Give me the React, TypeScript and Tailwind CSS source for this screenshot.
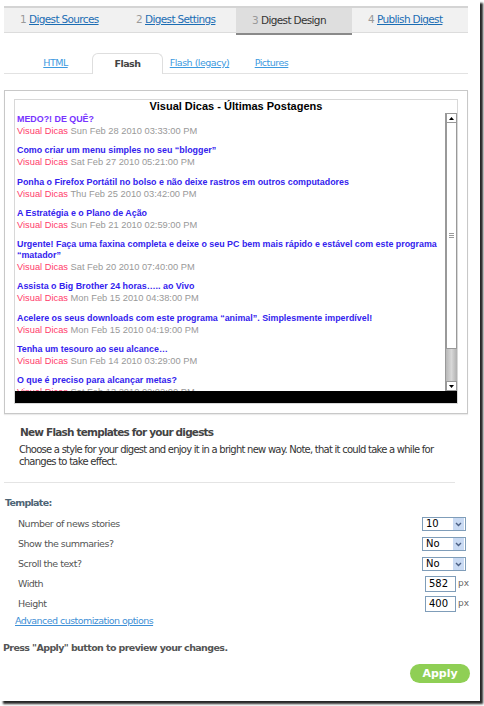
import React from "react";

type Post = { title: string; date: string; visited?: boolean };

const posts: Post[] = [
  { title: "MEDO?! DE QUÊ?", date: "Sun Feb 28 2010 03:33:00 PM", visited: true },
  { title: "Como criar um menu simples no seu “blogger”", date: "Sat Feb 27 2010 05:21:00 PM" },
  { title: "Ponha o Firefox Portátil no bolso e não deixe rastros em outros computadores", date: "Thu Feb 25 2010 03:42:00 PM" },
  { title: "A Estratégia e o Plano de Ação", date: "Sun Feb 21 2010 02:59:00 PM" },
  { title: "Urgente! Faça uma faxina completa e deixe o seu PC bem mais rápido e estável com este programa “matador”", date: "Sat Feb 20 2010 07:40:00 PM" },
  { title: "Assista o Big Brother 24 horas….. ao Vivo", date: "Mon Feb 15 2010 04:38:00 PM" },
  { title: "Acelere os seus downloads com este programa “animal”. Simplesmente imperdível!", date: "Mon Feb 15 2010 04:19:00 PM" },
  { title: "Tenha um tesouro ao seu alcance…", date: "Sun Feb 14 2010 03:29:00 PM" },
  { title: "O que é preciso para alcançar metas?", date: "Sat Feb 13 2010 02:02:00 PM" },
];

const steps = [
  { n: 1, label: "Digest Sources" },
  { n: 2, label: "Digest Settings" },
  { n: 3, label: "Digest Design", active: true },
  { n: 4, label: "Publish Digest" },
];

const tabs = [
  { label: "HTML" },
  { label: "Flash", active: true },
  { label: "Flash (legacy)" },
  { label: "Pictures" },
];

const ui = "font-['DejaVu_Sans',Tahoma,sans-serif]";
const flash = "font-['Liberation_Sans',Arial,sans-serif]";

const Select = ({ value }: { value: string }) => (
  <div className="flex items-center w-[44px] h-[14px] border border-[#7f9db9] bg-white">
    <span className="flex-1 pl-[3px] text-[10px] leading-[12px] text-black">{value}</span>
    <span className="flex items-center justify-center w-[11px] h-[12px] bg-[#c9daf3] mr-px">
      <svg width="7" height="5" viewBox="0 0 7 5">
        <path d="M1 1 L3.5 3.5 L6 1" fill="none" stroke="#4d6185" strokeWidth="1.4" />
      </svg>
    </span>
  </div>
);

const NumInput = ({ value }: { value: string }) => (
  <div className="flex items-center gap-[2px]">
    <div className="w-[31px] h-[16px] border border-[#7f9db9] bg-white pl-[3px] text-[10px] leading-[14px] text-black">
      {value}
    </div>
    <span className="text-[9px] text-[#666]">px</span>
  </div>
);

const Scrollbar = () => (
  <div className="flex flex-col w-[12px] h-[278px] border-l border-[#999] bg-[#f4f4f4]">
    <div className="flex items-center justify-center h-[10px] bg-white border border-[#999]">
      <svg width="5" height="3" viewBox="0 0 5 3"><path d="M0 3 L2.5 0 L5 3Z" fill="#000" /></svg>
    </div>
    <div className="flex flex-col items-center justify-center h-[226px] bg-white border-x border-b border-[#999]">
      <div className="w-[5px] h-px bg-[#999] mb-px" />
      <div className="w-[5px] h-px bg-[#999] mb-px" />
      <div className="w-[5px] h-px bg-[#999]" />
    </div>
    <div className="flex-1 bg-gradient-to-r from-[#b8b8b8] via-[#d8d8d8] to-[#b0b0b0]" />
    <div className="flex items-center justify-center h-[10px] bg-white border border-[#999]">
      <svg width="5" height="3" viewBox="0 0 5 3"><path d="M0 0 L2.5 3 L5 0Z" fill="#000" /></svg>
    </div>
  </div>
);

export default function App() {
  return (
    <div className="w-[484px] h-[706px] bg-white overflow-hidden">
      <div className={`relative w-[480px] h-[701px] bg-white shadow-[3px_3px_2px_rgba(0,0,0,0.85)] ${ui}`}>
        {/* wizard steps */}
        <div className="pt-[6px] pl-[4px]">
          <div className="flex w-[464px] h-[27px] border-t-2 border-[#d4d4d4] border-b border-b-[#dcdcdc] bg-[#f1f1f1]">
            {steps.map((s) => (
              <div
                key={s.n}
                className={`w-[116px] pl-[16px] flex items-center text-[10.5px] tracking-[-0.65px] ${
                  s.active ? "bg-[#dedede] border-b-2 border-[#8a8a8a] h-[27px]" : ""
                }`}
              >
                <span className="text-[#999] mr-[3px]">{s.n}</span>
                {s.active ? (
                  <span className="text-[#333]">{s.label}</span>
                ) : (
                  <span className="text-[#1b6db4] underline">{s.label}</span>
                )}
              </div>
            ))}
          </div>
        </div>

        {/* design tabs */}
        <div className="mt-[20px] ml-[4px] w-[464px] border-b border-[#e2e2e2] flex pl-[16px] gap-[1px] text-[9.5px] tracking-[-0.5px]">
          {tabs.map((t) =>
            t.active ? (
              <div
                key={t.label}
                className="w-[71px] h-[21px] -mb-px flex items-center justify-center rounded-t-[6px] border border-b-0 border-[#dedede] bg-white font-bold text-[#444]"
              >
                {t.label}
              </div>
            ) : (
              <div key={t.label} className="w-[71px] h-[20px] flex items-center justify-center">
                <span className="text-[#3d9ae0] underline">{t.label}</span>
              </div>
            )
          )}
        </div>

        {/* flash preview */}
        <div className="mt-[16px] ml-[4px] w-[464px] h-[324px] border border-[#c8c8c8] shadow-[0_1px_1px_rgba(0,0,0,0.08)] pt-[8px] pl-[9px]">
          <div className={`w-[444px] h-[305px] border border-[#d8d8d8] bg-white flex flex-col ${flash}`}>
            <div className="h-[13px] flex items-center justify-center text-[11px] font-bold text-black">
              Visual Dicas - Últimas Postagens
            </div>
            <div className="flex h-[278px]">
              <div className="flex-1 overflow-hidden pl-[2px] pt-px">
                {posts.map((p) => (
                  <div key={p.date} className="mb-[8.25px]">
                    <div
                      className={`text-[8.9px] leading-[11px] font-bold ${
                        p.visited ? "text-[#7733ff]" : "text-[#3322ee]"
                      }`}
                    >
                      {p.title}
                    </div>
                    <div className="text-[9.3px] leading-[12px]">
                      <span className="text-[#ff3b6b]">Visual Dicas</span>{" "}
                      <span className="text-[#999]">{p.date}</span>
                    </div>
                  </div>
                ))}
              </div>
              <Scrollbar />
            </div>
            <div className="h-[13px] bg-black" />
          </div>
        </div>

        {/* description */}
        <div className="pl-[20px] mt-[10px] text-[10.5px] tracking-[-0.8px] leading-[16px] font-bold text-[#444]">
          New Flash templates for your digests
        </div>
        <p className="pl-[19px] pr-[20px] mt-[4px] text-[10px] tracking-[-0.75px] leading-[12px] text-[#333]">
          Choose a style for your digest and enjoy it in a bright new way. Note, that it could take a while for changes to take effect.
        </p>
        <div className="mt-[14px] ml-[4px] w-[451px] h-px bg-[#e4e4e4]" />

        {/* template form */}
        <div className="mt-[13px] pl-[5px] text-[9.5px] tracking-[-0.7px] leading-[14px] font-bold text-[#4d6475]">
          Template:
        </div>
        <div className="mt-[4px] w-[468px] text-[9.5px] tracking-[-0.5px] text-[#555]">
          {[
            { label: "Number of news stories", ctl: <Select value="10" /> },
            { label: "Show the summaries?", ctl: <Select value="No" /> },
            { label: "Scroll the text?", ctl: <Select value="No" /> },
            { label: "Width", ctl: <NumInput value="582" /> },
            { label: "Height", ctl: <NumInput value="400" /> },
          ].map((r, i) => (
            <div key={r.label} className="flex items-center justify-between h-[20px] pl-[18px]">
              <span>{r.label}</span>
              <div className={`w-[46px] flex tracking-normal ${i > 2 ? "pl-[3px]" : ""}`}>{r.ctl}</div>
            </div>
          ))}
        </div>
        <div className="mt-px pl-[15px] text-[9.5px] tracking-[-0.55px] leading-[12px]">
          <span className="text-[#3d8fd6] underline">Advanced customization options</span>
        </div>

        <div className="mt-[13px] pl-[3px] text-[9.5px] tracking-[-0.6px] leading-[16px] font-bold text-[#555]">
          Press "Apply" button to preview your changes.
        </div>
        <div className="mt-[8px] flex justify-end pr-[10px]">
          <button className="w-[60px] h-[19px] rounded-full bg-[#8fcf55] text-white text-[11px] font-bold leading-[19px]">
            Apply
          </button>
        </div>
      </div>
    </div>
  );
}
